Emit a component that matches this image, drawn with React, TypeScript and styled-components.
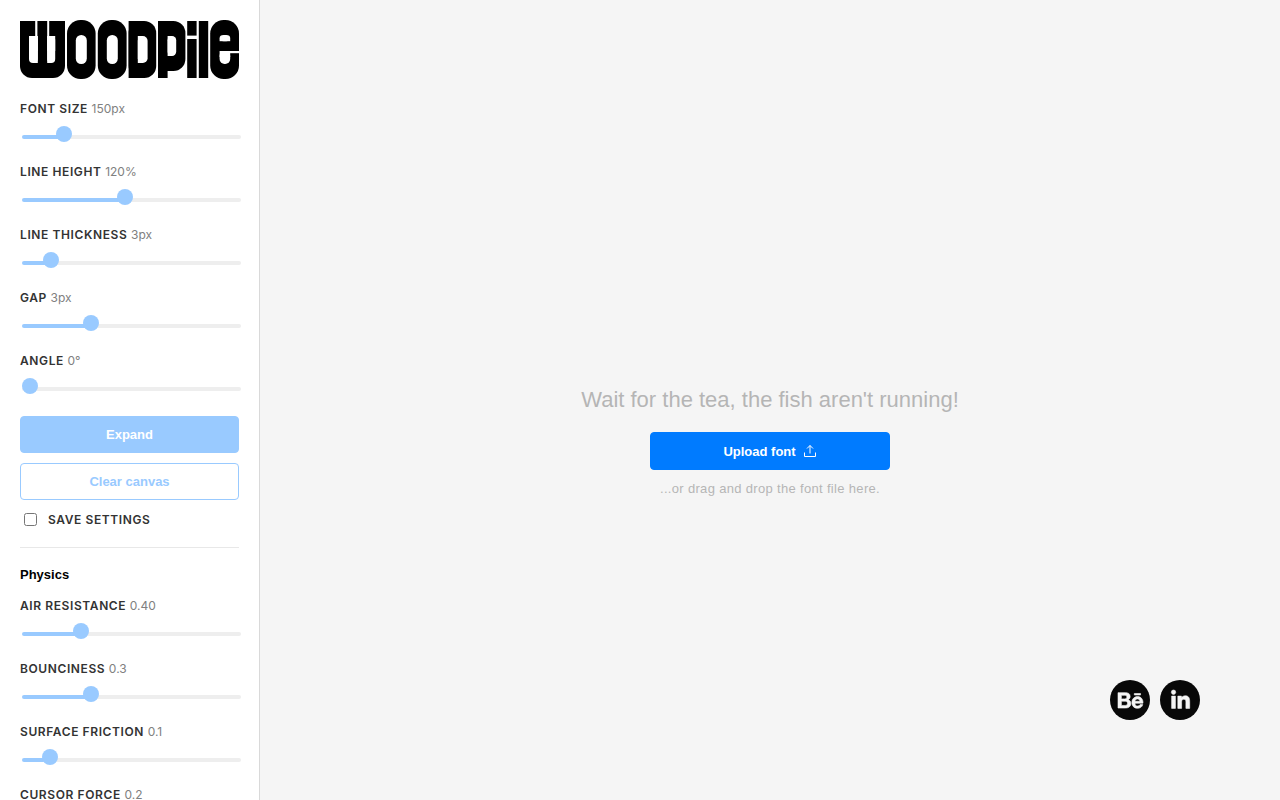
import React, { useId, useState } from "react";
import styled, { createGlobalStyle } from "styled-components";
import { FaBehance, FaLinkedinIn } from "react-icons/fa";

const GlobalStyle = createGlobalStyle`
  *, *::before, *::after { box-sizing: border-box; }
  body {
    margin: 0;
    background: #f5f5f5;
    font-family: "Liberation Sans", Arial, sans-serif;
  }
`;

const sky = "#99caff";
const blue = "#007bff";

const Page = styled.div`
  display: flex;
  height: 100vh;
`;

const Sidebar = styled.aside`
  flex: none;
  width: 260px;
  height: 100%;
  padding: 20px;
  overflow-x: hidden;
  overflow-y: auto;
  scrollbar-width: none;
  background: #fff;
  border-right: 1px solid #d9d9d9;
`;

const Logo = styled.svg`
  display: block;
  width: 100%;
  height: auto;
  margin-bottom: 22px;
`;

const Field = styled.div`
  display: flex;
  flex-direction: column;
  gap: 18px;
  margin-bottom: 25px;
`;

const Label = styled.label`
  color: #333;
  font-family: Inter, sans-serif;
  font-size: 12px;
  font-weight: 600;
  line-height: 16px;
  letter-spacing: 0.05em;
`;

const Value = styled.output`
  color: #808080;
  font-weight: 400;
  letter-spacing: 0;
`;

const Range = styled.input`
  appearance: none;
  flex: none;
  width: 100%;
  height: 4px;
  margin: 0 0 0 2px;
  border-radius: 2px;
  background: linear-gradient(${sky}, ${sky}) 0 0 / var(--fill) 100% no-repeat #eee;
  cursor: pointer;

  &::-webkit-slider-runnable-track {
    height: 4px;
  }

  &::-webkit-slider-thumb {
    appearance: none;
    width: 16px;
    height: 16px;
    margin-top: -9px;
    border-radius: 50%;
    background: ${sky};
  }
`;

const Button = styled.button<{ $kind: "soft" | "outline" | "primary" }>`
  display: flex;
  align-items: center;
  justify-content: center;
  gap: 7px;
  width: 100%;
  height: ${(p) => (p.$kind === "primary" ? "38px" : "37px")};
  padding: 0;
  border: 1px solid ${(p) => (p.$kind === "primary" ? blue : sky)};
  border-radius: 4px;
  background: ${(p) => ({ soft: sky, outline: "#fff", primary: blue })[p.$kind]};
  color: ${(p) => (p.$kind === "outline" ? sky : "#fff")};
  font-family: inherit;
  font-size: 13px;
  font-weight: 700;
  cursor: pointer;
`;

const Actions = styled.div`
  display: flex;
  flex-direction: column;
  gap: 10px;
`;

const CheckRow = styled.div`
  display: flex;
  align-items: flex-start;
  gap: 11px;
  margin: 12px 0 19px;
  padding-left: 4px;
`;

const Checkbox = styled.input`
  width: 13px;
  height: 13px;
  margin: 1px 0 0;
`;

const Divider = styled.hr`
  height: 1px;
  margin: 0 0 18px;
  border: 0;
  background: #e8e8e8;
`;

const SectionTitle = styled.h2`
  margin: 0 0 14px;
  color: #000;
  font-size: 13px;
  font-weight: 700;
  line-height: 18px;
`;

const Canvas = styled.main`
  flex: 1;
  display: flex;
  align-items: center;
  justify-content: center;
  min-width: 0;
  padding-top: 83px;
`;

const DropZone = styled.div`
  display: flex;
  flex-direction: column;
  align-items: center;
  gap: 10px;
`;

const Headline = styled.p`
  margin: 0 0 7px;
  color: #b5b5b5;
  font-size: 22px;
  line-height: 30px;
`;

const UploadWrap = styled.div`
  width: 240px;
`;

const Hint = styled.p`
  margin: 0;
  color: #b5b5b5;
  font-size: 13px;
  line-height: 18px;
  letter-spacing: 0.025em;
`;

const Socials = styled.nav`
  position: fixed;
  right: 80px;
  bottom: 80px;
  display: flex;
  gap: 10px;
`;

const SocialLink = styled.a`
  display: flex;
  align-items: center;
  justify-content: center;
  width: 40px;
  height: 40px;
  border-radius: 50%;
  background: #080808;
  color: #f5f5f5;

  svg {
    overflow: visible;
    stroke: currentColor;
    stroke-width: 14px;
  }
`;

type SliderProps = {
  label: string;
  min?: number;
  max: number;
  step?: number;
  initial: number;
  format?: (n: number) => string;
};

function Slider({ label, min = 0, max, step = 1, initial, format = String }: SliderProps) {
  const id = useId();
  const [value, setValue] = useState(initial);
  const ratio = (value - min) / (max - min);
  const fill = { "--fill": `${ratio * 100}%` } as React.CSSProperties;
  return (
    <Field>
      <Label htmlFor={id}>
        {label} <Value>{format(value)}</Value>
      </Label>
      <Range
        id={id}
        type="range"
        min={min}
        max={max}
        step={step}
        value={value}
        onChange={(e) => setValue(Number(e.target.value))}
        style={fill}
      />
    </Field>
  );
}

function WoodpileLogo() {
  return (
    <Logo viewBox="0 0 219 59" role="img" aria-label="Woodpile">
      <g fill="#000">
        <rect x="0" y="1" width="45" height="57" rx="12" />
        <rect x="0" y="1" width="45" height="30" />
        <rect x="47" y="0" width="28.6" height="59" rx="13.5" />
        <rect x="77.8" y="0" width="28.8" height="59" rx="13.5" />
        <rect x="108.6" y="1" width="27.6" height="57" rx="12" />
        <rect x="108.6" y="1" width="14" height="57" />
        <rect x="138" y="1" width="27.4" height="50" rx="12" />
        <rect x="138" y="1" width="14" height="50" />
        <rect x="138" y="1" width="9.6" height="57" />
        <rect x="167.2" y="1" width="9.4" height="14.6" />
        <rect x="167.2" y="19" width="9.4" height="39" />
        <rect x="178.8" y="1" width="9.4" height="57" />
        <rect x="190.2" y="0" width="28.8" height="59" rx="13.5" />
      </g>
      <g fill="#fff">
        <rect x="15.2" y="0" width="2.2" height="18" />
        <rect x="27.2" y="0" width="2" height="18" />
        <rect x="9" y="16" width="8.8" height="27" rx="4" />
        <rect x="9" y="16" width="8.8" height="15" />
        <rect x="13" y="16" width="4.8" height="27" />
        <rect x="27.2" y="16" width="8" height="27" rx="4" />
        <rect x="27.2" y="16" width="8" height="15" />
        <rect x="27.2" y="16" width="4" height="27" />
        <rect x="55.8" y="15" width="11" height="29" rx="5.4" />
        <rect x="86.8" y="15" width="11" height="29" rx="5.4" />
        <rect x="117.8" y="16" width="9.8" height="27" rx="4.8" />
        <rect x="117.8" y="16" width="5" height="27" />
        <rect x="147.6" y="16" width="8.6" height="20" rx="4.2" />
        <rect x="147.6" y="16" width="4.4" height="20" />
        <rect x="199.6" y="15" width="10.6" height="6.2" rx="4" />
        <rect x="199.6" y="18.4" width="10.6" height="2.8" />
        <rect x="199.6" y="31" width="10.6" height="13" rx="5" />
        <rect x="199.6" y="31" width="10.6" height="6" />
        <rect x="209" y="31" width="10" height="2.2" />
      </g>
    </Logo>
  );
}

function UploadIcon() {
  return (
    <svg width="14" height="14" viewBox="0 0 14 14" fill="none" stroke="currentColor" aria-hidden="true">
      <path d="M1.5 8.5v4h11v-4M7 9.5V1.5M4 4.5l3-3 3 3" />
    </svg>
  );
}

export default function App() {
  return (
    <>
      <GlobalStyle />
      <Page>
        <Sidebar>
          <WoodpileLogo />
          <Slider label="FONT SIZE" min={50} max={650} initial={150} format={(n) => `${n}px`} />
          <Slider label="LINE HEIGHT" min={50} max={200} initial={120} format={(n) => `${n}%`} />
          <Slider label="LINE THICKNESS" min={1} max={20} initial={3} format={(n) => `${n}px`} />
          <Slider label="GAP" max={10} initial={3} format={(n) => `${n}px`} />
          <Slider label="ANGLE" max={360} initial={0} format={(n) => `${n}°`} />
          <Actions>
            <Button type="button" $kind="soft">Expand</Button>
            <Button type="button" $kind="outline">Clear canvas</Button>
          </Actions>
          <CheckRow>
            <Checkbox id="save-settings" type="checkbox" />
            <Label htmlFor="save-settings">SAVE SETTINGS</Label>
          </CheckRow>
          <Divider />
          <SectionTitle>Physics</SectionTitle>
          <Slider label="AIR RESISTANCE" max={1.6} step={0.01} initial={0.4} format={(n) => n.toFixed(2)} />
          <Slider label="BOUNCINESS" max={1} step={0.1} initial={0.3} />
          <Slider label="SURFACE FRICTION" max={1} step={0.1} initial={0.1} />
          <Slider label="CURSOR FORCE" max={1} step={0.1} initial={0.2} />
        </Sidebar>
        <Canvas>
          <DropZone>
            <Headline>Wait for the tea, the fish aren't running!</Headline>
            <UploadWrap>
              <Button type="button" $kind="primary">
                Upload font
                <UploadIcon />
              </Button>
            </UploadWrap>
            <Hint>...or drag and drop the font file here.</Hint>
          </DropZone>
        </Canvas>
      </Page>
      <Socials aria-label="Social links">
        <SocialLink href="#behance" aria-label="Behance">
          <FaBehance size={25} />
        </SocialLink>
        <SocialLink href="#linkedin" aria-label="LinkedIn">
          <FaLinkedinIn size={21} />
        </SocialLink>
      </Socials>
    </>
  );
}
